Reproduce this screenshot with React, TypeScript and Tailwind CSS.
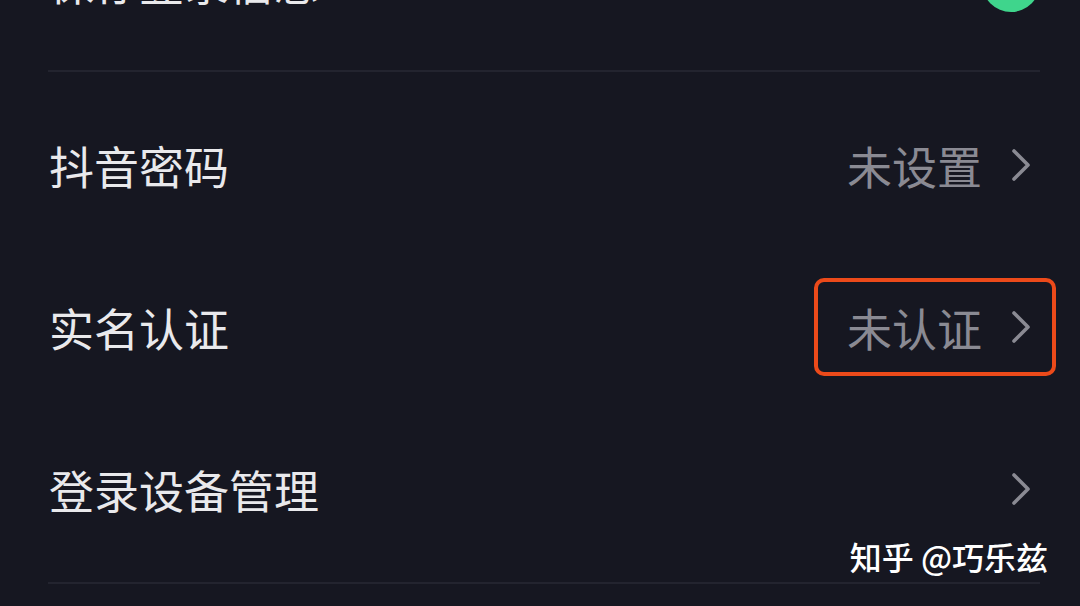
const font = { fontFamily: '"Noto Sans CJK SC", "Noto Sans", sans-serif' };

function Chevron() {
  return (
    <svg width="22" height="34" viewBox="0 0 22 34" className="shrink-0">
      <polyline
        points="4,3 18,17 4,31"
        fill="none"
        stroke="#8a8a93"
        strokeWidth="3.6"
        strokeLinecap="round"
        strokeLinejoin="round"
      />
    </svg>
  );
}

interface RowProps {
  label: string;
  value?: string;
  highlight?: boolean;
}

function Row({ label, value, highlight }: RowProps) {
  return (
    <div className="relative h-[162px] flex items-center justify-between pl-[49px] pr-[48px]">
      <span className="text-[45px] leading-none text-[#e9e9ec]">{label}</span>
      <div className="flex items-center gap-[28px]">
        {value && <span className="text-[45px] leading-none text-[#8a8a93]">{value}</span>}
        <Chevron />
      </div>
      {highlight && (
        <div className="absolute right-[24px] top-[32px] w-[242px] h-[98px] rounded-[10px] border-[4px] border-[#ec4a1a]" />
      )}
    </div>
  );
}

export default function App() {
  return (
    <div className="relative w-[1080px] h-[606px] overflow-hidden bg-[#161721]" style={font}>
      {/* row above, only its lower edge is on screen */}
      <div className="relative h-[166px] -mt-[102px] flex items-center justify-between pl-[49px] pr-[46px]">
        <span className="text-[45px] leading-none text-[#e9e9ec]">保存登录信息</span>
        <div className="w-[58px] h-[58px] rounded-full bg-[#3fd58c] mt-[4px] mr-[-6px]" />
      </div>
      <div className="ml-[48px] mr-[40px] h-[2px] mt-[6px] bg-[#23242f]" />

      <div className="py-[12px]">
        <Row label="抖音密码" value="未设置" />
        <Row label="实名认证" value="未认证" highlight />
        <Row label="登录设备管理" />
      </div>
      <div className="ml-[48px] mr-[40px] h-[2px] bg-[#23242f]" />

      {/* watermark */}
      <div className="absolute right-[32px] top-[540px] text-[32px] leading-none font-medium text-white">
        知乎 @巧乐兹
      </div>
    </div>
  );
}
